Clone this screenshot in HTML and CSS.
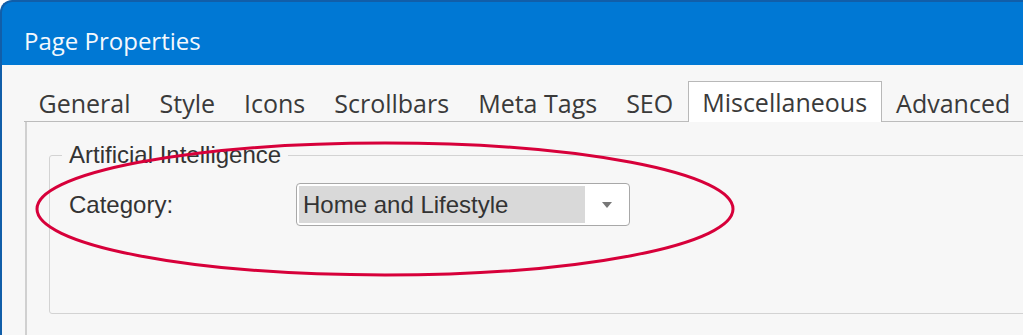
FILE: index.html
```html
<!DOCTYPE html>
<html>
<head lang="en">
    <meta charset="UTF-8">
    <title>Page Properties</title>
    <link rel="stylesheet" href="styles.css">
</head>
<body>
<div class="window">
    <div class="titleBar">Page Properties</div>
    <div class="content">
        <!-- tabs -->
        <div class="tabs">
            <div class="tab">General</div>
            <div class="tab">Style</div>
            <div class="tab">Icons</div>
            <div class="tab">Scrollbars</div>
            <div class="tab">Meta Tags</div>
            <div class="tab">SEO</div>
            <div class="tab active">Miscellaneous</div>
            <div class="tab">Advanced</div>
        </div>
        <div class="panel">
            <fieldset class="group">
                <legend>Artificial Intelligence</legend>
                <div class="row">
                    <span class="label">Category:</span>
                    <div class="select">
                        <span class="value">Home and Lifestyle</span>
                        <span class="arrow"></span>
                    </div>
                </div>
            </fieldset>
        </div>
    </div>
</div>
<!-- red mark drawn over the dialog -->
<svg class="mark" width="1023" height="335" viewBox="0 0 1023 335">
    <ellipse cx="385" cy="209" rx="348" ry="66" fill="none" stroke="#d7003a" stroke-width="3"/>
</svg>
</body>
</html>
```

FILE: styles.css
```css
html,body{margin:0;padding:0;}
body{
    background:#fff;width:1023px;height:335px;overflow:hidden;position:relative;
}
.window{
    width:1120px;height:360px;background:#0078d4;
    border-top:2px solid #115ea9;border-left:2px solid #115ea9;
    border-radius:12px 0 0 0;box-sizing:border-box;
    display:flex;flex-direction:column;
}
.titleBar{
    height:63px;box-sizing:border-box;padding:22px 0 0 22px;
    font-family:"Open Sans",sans-serif;font-size:24px;line-height:34px;color:#f4f8fd;
}
.content{
    flex:1;background:#f7f7f7;display:flex;flex-direction:column;
}
.tabs{
    display:flex;align-items:flex-end;height:57px;box-sizing:border-box;
    margin-left:22px;border-bottom:1px solid #bcbcbc;
}
.tab{
    padding:0 13.5px;height:39px;line-height:39px;box-sizing:border-box;
    font-family:"Open Sans",sans-serif;font-size:25px;color:#3a3a3a;
    border:1px solid transparent;border-bottom:none;
    margin-bottom:-1px;
}
.tab.active{
    background:#fff;border-color:#b8b8b8;height:41px;padding-top:1px;line-height:39px;
}
.panel{
    flex:1;margin-left:23px;border-left:2px solid #d0d0d0;
    padding:19px 0 0 22px;
}
.group{
    margin:0;border:1px solid #d3d3d3;border-radius:3px;
    padding:0 0 87px 12px;
    font-family:"Liberation Sans",Arial,sans-serif;font-size:24px;color:#333;
}
.group legend{
    padding:0 7px;line-height:28px;
}
.row{
    display:flex;align-items:center;height:43px;margin:14px 0 0 7px;
}
.label{width:227px;}
.select{
    width:334px;height:43px;box-sizing:border-box;
    border:1px solid #a8a8a8;border-radius:4px;background:#fff;
    display:flex;align-items:center;padding:2px;
}
.value{
    width:286px;height:100%;background:#d9d9d9;box-sizing:border-box;
    padding-left:4px;display:flex;align-items:center;
}
.arrow{
    margin-left:17px;width:0;height:0;
    border-left:5px solid transparent;border-right:5px solid transparent;
    border-top:6px solid #777;
}
.mark{position:absolute;left:0;top:0;pointer-events:none;}
```
